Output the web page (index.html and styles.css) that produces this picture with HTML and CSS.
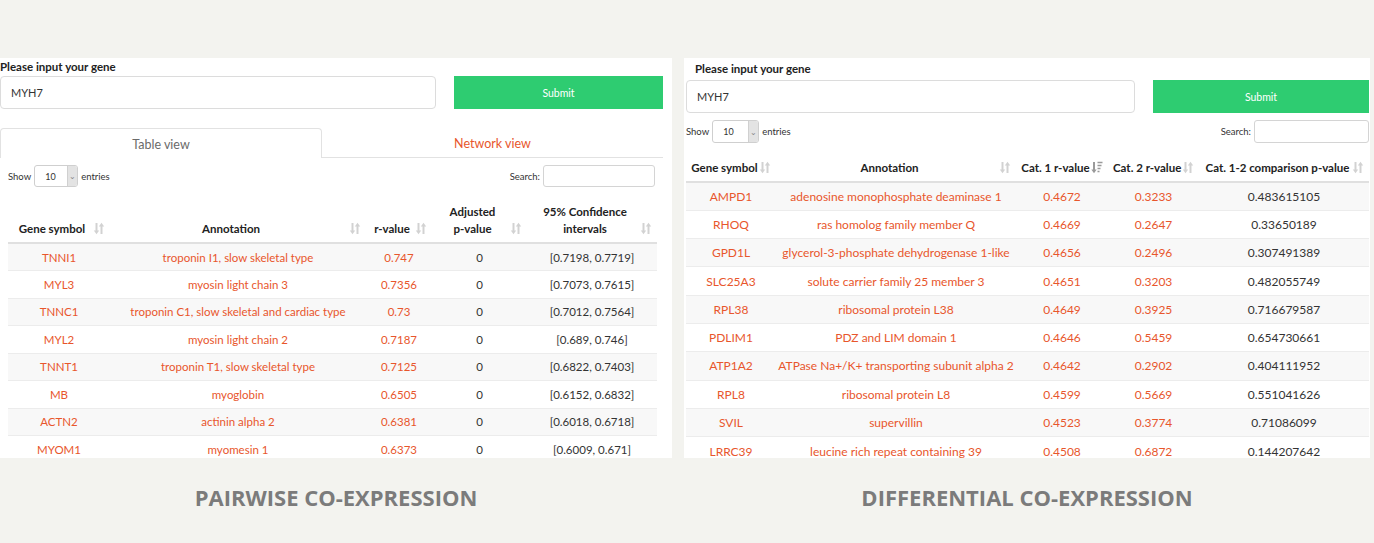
FILE: index.html
```html
<!DOCTYPE html>
<html lang="en">
<head>
<meta charset="utf-8">
<title>Co-expression</title>
<link rel="stylesheet" href="styles.css">
</head>
<body>
<svg width="0" height="0" class="defs" aria-hidden="true">
  <defs>
    <symbol id="sort" viewBox="0 0 12 13">
      <path d="M3.5 1v8.5" stroke="#d2d2d2" stroke-width="2" fill="none"/>
      <path d="M0.8 8.6h5.4L3.5 12.2z" fill="#d2d2d2"/>
      <path d="M8.5 12V3.5" stroke="#d2d2d2" stroke-width="2" fill="none"/>
      <path d="M5.8 4.4h5.4L8.5 0.8z" fill="#d2d2d2"/>
    </symbol>
    <symbol id="sort-desc" viewBox="0 0 12 13">
      <path d="M3 1v8.5" stroke="#9a9a9a" stroke-width="2" fill="none"/>
      <path d="M0.3 8.6h5.4L3 12.2z" fill="#9a9a9a"/>
      <path d="M6.5 1.5h5M6.5 4.5h4M6.5 7.5h3M6.5 10.5h2" stroke="#9a9a9a" stroke-width="1.4" fill="none"/>
    </symbol>
  </defs>
</svg>
<div class="stage">
  <section class="panel panel-left">
    <div class="label">Please input your gene</div>
    <div class="form-row">
      <div class="gene-input">MYH7</div>
      <div class="submit">Submit</div>
    </div>
    <div class="tabs">
      <div class="tab tab-active">Table view</div>
      <div class="tab tab-link">Network view</div>
    </div>
    <div class="controls">
      <div class="length">Show <span class="select"><span class="select-val">10</span><span class="caret">&#x2304;</span></span> entries</div>
      <div class="search">Search: <span class="search-box"></span></div>
    </div>
    <table class="dt dt-left">
      <colgroup>
        <col class="c-l1"><col class="c-l2"><col class="c-l3"><col class="c-l4"><col class="c-l5">
      </colgroup>
      <thead>
        <tr>
          <th>Gene symbol<svg class="si"><use href="#sort"/></svg></th>
          <th>Annotation<svg class="si"><use href="#sort"/></svg></th>
          <th>r-value<svg class="si"><use href="#sort"/></svg></th>
          <th>Adjusted<br>p-value<svg class="si"><use href="#sort"/></svg></th>
          <th>95% Confidence<br>intervals<svg class="si"><use href="#sort"/></svg></th>
        </tr>
      </thead>
      <tbody>
        <tr><td class="o">TNNI1</td><td class="o">troponin I1, slow skeletal type</td><td class="o">0.747</td><td>0</td><td>[0.7198, 0.7719]</td></tr>
        <tr><td class="o">MYL3</td><td class="o">myosin light chain 3</td><td class="o">0.7356</td><td>0</td><td>[0.7073, 0.7615]</td></tr>
        <tr><td class="o">TNNC1</td><td class="o">troponin C1, slow skeletal and cardiac type</td><td class="o">0.73</td><td>0</td><td>[0.7012, 0.7564]</td></tr>
        <tr><td class="o">MYL2</td><td class="o">myosin light chain 2</td><td class="o">0.7187</td><td>0</td><td>[0.689, 0.746]</td></tr>
        <tr><td class="o">TNNT1</td><td class="o">troponin T1, slow skeletal type</td><td class="o">0.7125</td><td>0</td><td>[0.6822, 0.7403]</td></tr>
        <tr><td class="o">MB</td><td class="o">myoglobin</td><td class="o">0.6505</td><td>0</td><td>[0.6152, 0.6832]</td></tr>
        <tr><td class="o">ACTN2</td><td class="o">actinin alpha 2</td><td class="o">0.6381</td><td>0</td><td>[0.6018, 0.6718]</td></tr>
        <tr><td class="o">MYOM1</td><td class="o">myomesin 1</td><td class="o">0.6373</td><td>0</td><td>[0.6009, 0.671]</td></tr>
      </tbody>
    </table>
  </section>

  <section class="panel panel-right">
    <div class="label">Please input your gene</div>
    <div class="form-row">
      <div class="gene-input">MYH7</div>
      <div class="submit">Submit</div>
    </div>
    <div class="controls">
      <div class="length">Show <span class="select"><span class="select-val">10</span><span class="caret">&#x2304;</span></span> entries</div>
      <div class="search">Search: <span class="search-box"></span></div>
    </div>
    <table class="dt dt-right">
      <colgroup>
        <col class="c-r1"><col class="c-r2"><col class="c-r3"><col class="c-r4"><col class="c-r5">
      </colgroup>
      <thead>
        <tr>
          <th>Gene symbol<svg class="si"><use href="#sort"/></svg></th>
          <th>Annotation<svg class="si"><use href="#sort"/></svg></th>
          <th>Cat. 1 r-value<svg class="si"><use href="#sort-desc"/></svg></th>
          <th>Cat. 2 r-value<svg class="si"><use href="#sort"/></svg></th>
          <th>Cat. 1-2 comparison p-value<svg class="si"><use href="#sort"/></svg></th>
        </tr>
      </thead>
      <tbody>
        <tr><td class="o">AMPD1</td><td class="o">adenosine monophosphate deaminase 1</td><td class="o">0.4672</td><td class="o">0.3233</td><td>0.483615105</td></tr>
        <tr><td class="o">RHOQ</td><td class="o">ras homolog family member Q</td><td class="o">0.4669</td><td class="o">0.2647</td><td>0.33650189</td></tr>
        <tr><td class="o">GPD1L</td><td class="o">glycerol-3-phosphate dehydrogenase 1-like</td><td class="o">0.4656</td><td class="o">0.2496</td><td>0.307491389</td></tr>
        <tr><td class="o">SLC25A3</td><td class="o">solute carrier family 25 member 3</td><td class="o">0.4651</td><td class="o">0.3203</td><td>0.482055749</td></tr>
        <tr><td class="o">RPL38</td><td class="o">ribosomal protein L38</td><td class="o">0.4649</td><td class="o">0.3925</td><td>0.716679587</td></tr>
        <tr><td class="o">PDLIM1</td><td class="o">PDZ and LIM domain 1</td><td class="o">0.4646</td><td class="o">0.5459</td><td>0.654730661</td></tr>
        <tr><td class="o">ATP1A2</td><td class="o">ATPase Na+/K+ transporting subunit alpha 2</td><td class="o">0.4642</td><td class="o">0.2902</td><td>0.404111952</td></tr>
        <tr><td class="o">RPL8</td><td class="o">ribosomal protein L8</td><td class="o">0.4599</td><td class="o">0.5669</td><td>0.551041626</td></tr>
        <tr><td class="o">SVIL</td><td class="o">supervillin</td><td class="o">0.4523</td><td class="o">0.3774</td><td>0.71086099</td></tr>
        <tr><td class="o">LRRC39</td><td class="o">leucine rich repeat containing 39</td><td class="o">0.4508</td><td class="o">0.6872</td><td>0.144207642</td></tr>
      </tbody>
    </table>
  </section>
</div>
<div class="captions">
  <div class="caption caption-left">PAIRWISE CO-EXPRESSION</div>
  <div class="caption caption-right">DIFFERENTIAL CO-EXPRESSION</div>
</div>
</body>
</html>
```

FILE: styles.css
```css
* { box-sizing: border-box; }
html, body { margin: 0; padding: 0; }
body {
  background: #f3f3ef;
  font-family: Lato, "Open Sans", sans-serif;
  color: #333;
  width: 1374px;
  height: 543px;
  overflow: hidden;
}
.defs { position: absolute; width: 0; height: 0; }

.stage {
  display: flex;
  gap: 12px;
  padding-top: 58px;
}
.panel {
  background: #fff;
  height: 400px;
  overflow: hidden;
}
.panel-left { width: 672px; }
.panel-right { width: 686px; }

.label {
  font-weight: 700;
  font-size: 11.5px;
  color: #222;
}
.panel-left .label { height: 18px; line-height: 18px; }
.panel-right .label { height: 22px; line-height: 22px; padding-left: 11px; }

.form-row {
  display: flex;
  gap: 18px;
  height: 33px;
}
.panel-left .form-row { width: 663px; }
.panel-right .form-row { margin-left: 2px; width: 683px; }

.gene-input {
  flex: 1;
  border: 1px solid #dcdcdc;
  border-radius: 4px;
  font-size: 11px;
  line-height: 31px;
  padding-left: 10px;
  color: #333;
}
.submit {
  background: #2ecc71;
  color: #fff;
  font-size: 10.5px;
  display: flex;
  align-items: center;
  justify-content: center;
}
.panel-left .submit { width: 209px; }
.panel-right .submit { width: 216px; }

.tabs {
  display: flex;
  width: 663px;
  height: 30px;
  margin-top: 19px;
}
.tab {
  display: flex;
  align-items: center;
  justify-content: center;
  font-size: 12.5px;
  padding-top: 2px;
}
.tab-active {
  width: 322px;
  border: 1px solid #e2e2e2;
  border-bottom: none;
  border-radius: 4px 4px 0 0;
  color: #6a6a6a;
}
.tab-link {
  flex: 1;
  border-bottom: 1px solid #e2e2e2;
  color: #e8562c;
}

.controls {
  display: flex;
  justify-content: space-between;
  align-items: center;
  font-size: 9.5px;
  color: #333;
}
.panel-left .controls { height: 22px; margin: 7px 17px 0 8px; }
.panel-right .controls { height: 23px; margin: 7px 1px 0 2px; }

.length, .search { display: flex; align-items: center; gap: 3px; }
.select {
  display: flex;
  border: 1px solid #cfcfcf;
  border-radius: 3px;
  overflow: hidden;
  align-items: stretch;
}
.panel-left .select { width: 44px; height: 22px; }
.panel-right .select { width: 47px; height: 23px; }
.select-val {
  flex: 1;
  font-size: 9px;
  display: flex;
  align-items: center;
  padding-left: 10px;
}
.caret {
  width: 10px;
  background: #e3e3e3;
  border-left: 1px solid #d0d0d0;
  color: #888;
  font-size: 8px;
  display: flex;
  align-items: center;
  justify-content: center;
  line-height: 1;
}
.search-box {
  display: block;
  border: 1px solid #d4d4d4;
  border-radius: 3px;
}
.panel-left .search-box { width: 112px; height: 22px; }
.panel-right .search-box { width: 115px; height: 23px; }

.dt {
  border-collapse: collapse;
  table-layout: fixed;
}
.dt-left { width: 649px; margin: 11px 0 0 8px; font-size: 11.5px; }
.dt-right { width: 683px; margin: 7px 0 0 2px; font-size: 12px; }

.c-l1 { width: 102px; } .c-l2 { width: 256px; } .c-l3 { width: 66px; } .c-l4 { width: 95px; } .c-l5 { width: 130px; }
.c-r1 { width: 90px; } .c-r2 { width: 240px; } .c-r3 { width: 92px; } .c-r4 { width: 91px; } .c-r5 { width: 170px; }

.dt th {
  position: relative;
  font-weight: 700;
  color: #222;
  text-align: center;
  vertical-align: bottom;
  line-height: 17px;
  border-bottom: 2px solid #e0e0e0;
  white-space: nowrap;
}
.dt-left th { height: 45px; padding: 0 22px 5px 8px; font-size: 11.5px; }
.dt-right th { height: 32px; padding: 0 18px 5px 5px; font-size: 11.5px; }

.si {
  position: absolute;
  right: 5px;
  width: 12px;
  height: 13px;
}
.dt-left .si { bottom: 7px; }
.dt-right .si { bottom: 7px; }

.dt td {
  text-align: center;
  vertical-align: middle;
  border-top: 1px solid #ececec;
  color: #333;
  padding: 0 2px;
  white-space: nowrap;
}
.dt tbody tr:first-child td { border-top: none; }
.dt tbody tr:nth-child(odd) td { background: #f8f8f8; }
.dt-left td { height: 27.5px; }
.dt-right td { height: 28.3px; }
.dt td.o { color: #e8562c; }

.captions {
  display: flex;
  gap: 12px;
  margin-top: 24px;
}
.caption {
  font-family: "Open Sans", sans-serif;
  font-weight: 700;
  font-size: 22px;
  line-height: 30px;
  color: #7b7b7b;
  text-align: center;
}
.caption-left { width: 672px; }
.caption-right { width: 686px; }
```
